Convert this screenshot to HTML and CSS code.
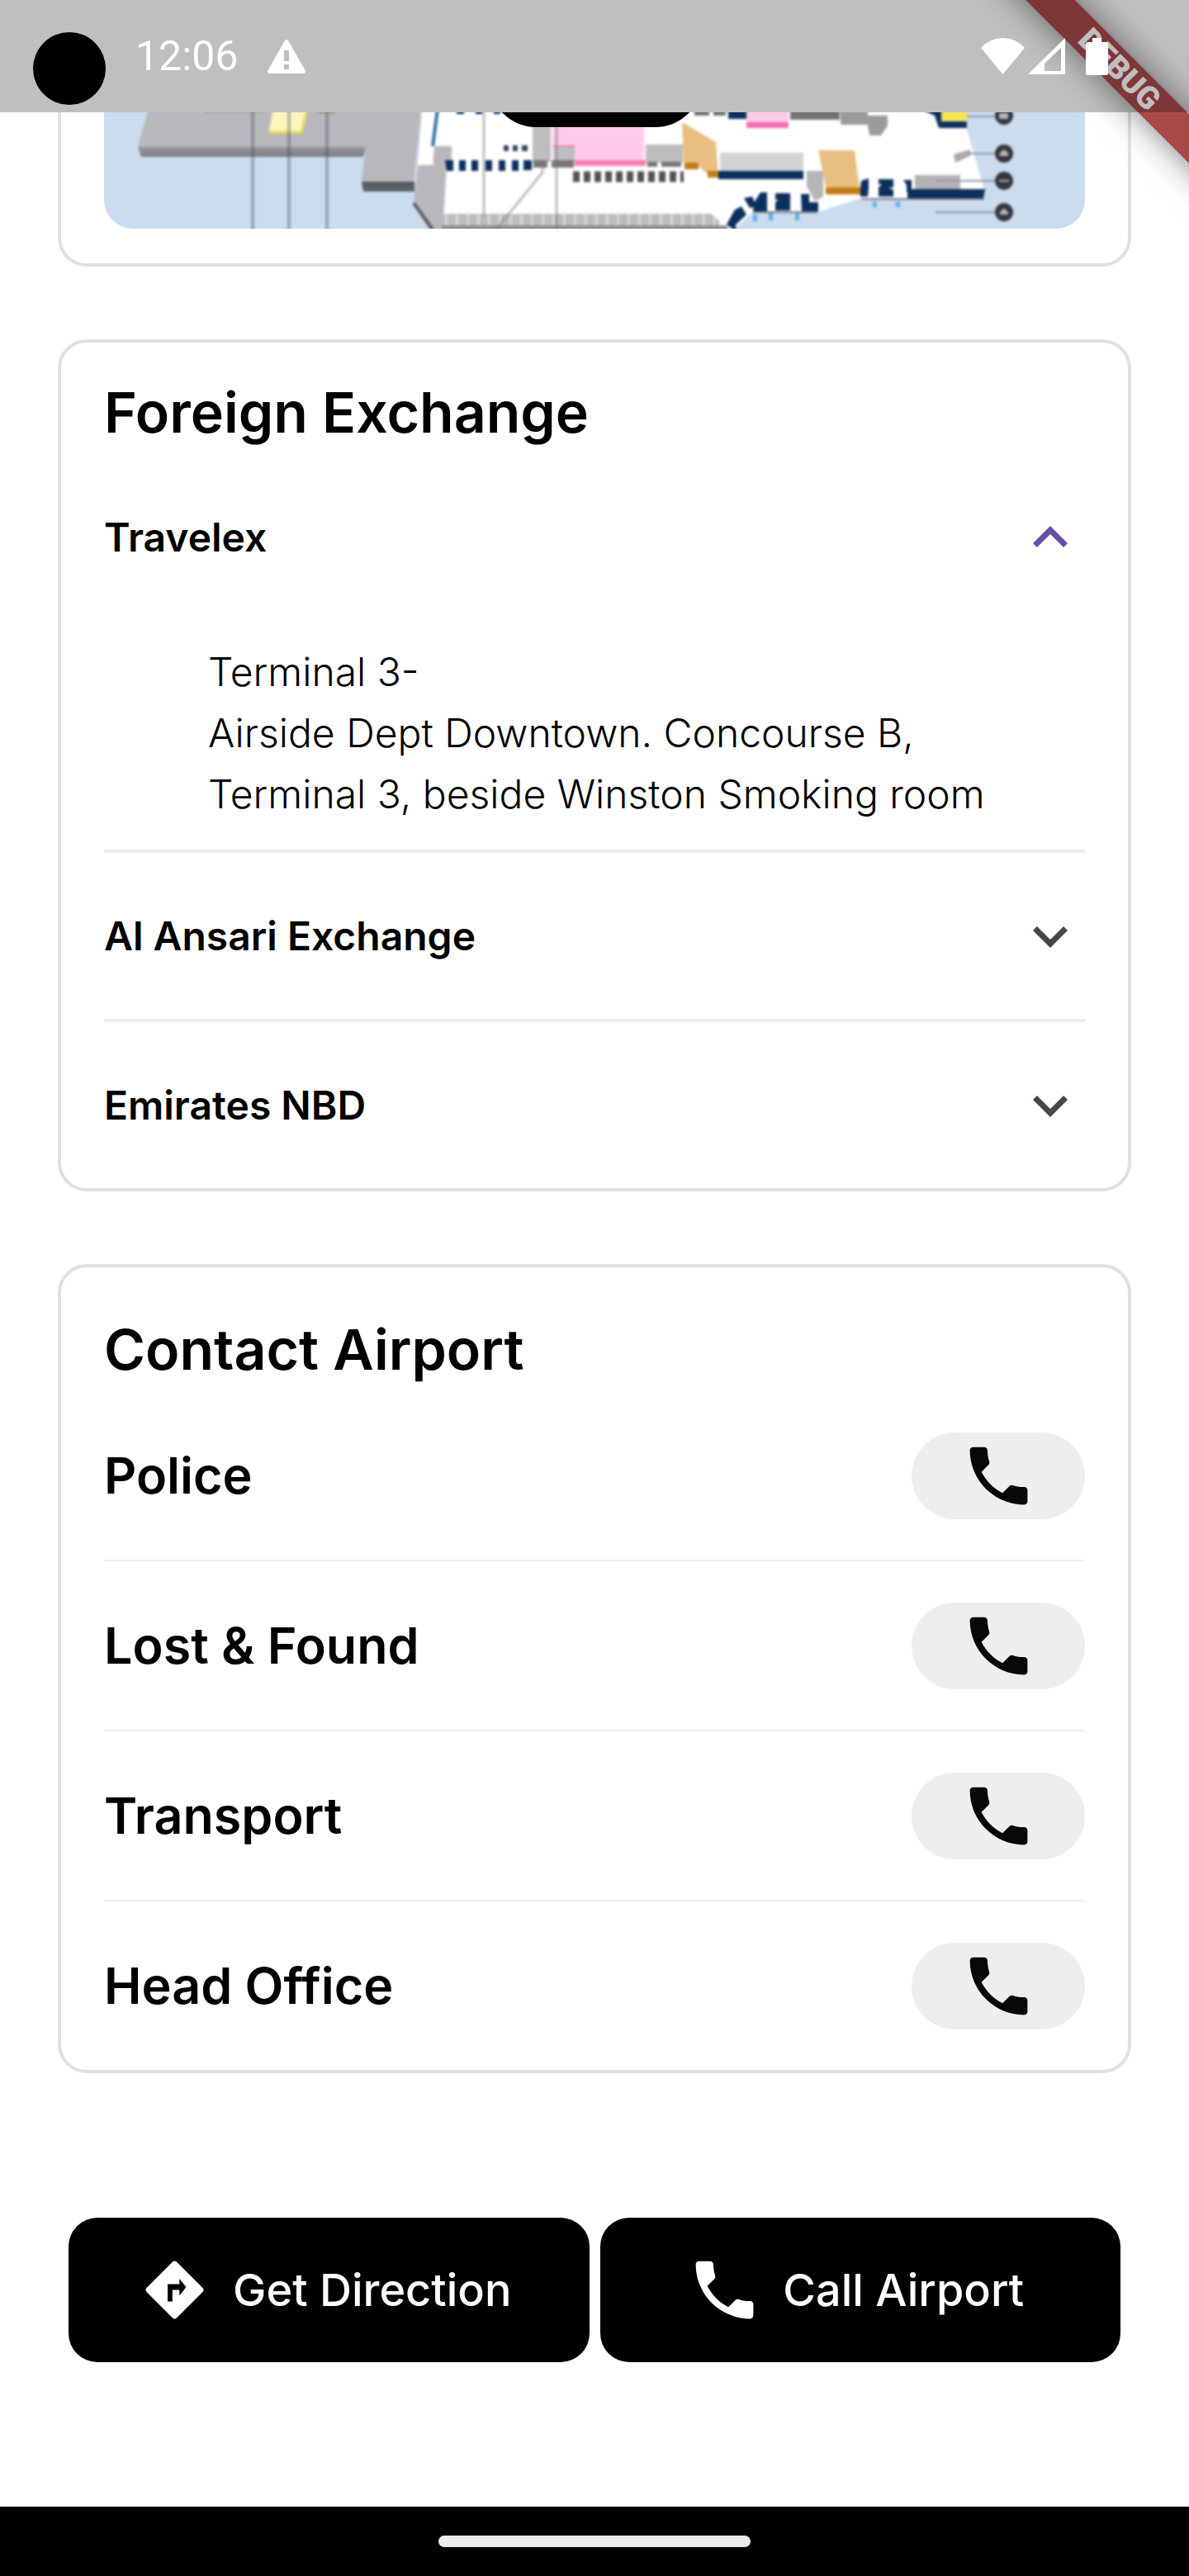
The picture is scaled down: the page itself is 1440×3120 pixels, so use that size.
FILE: index.html
```html
<!DOCTYPE html>
<html lang="en">
<head>
<meta charset="utf-8">
<meta name="viewport" content="width=device-width, initial-scale=1">
<title>Airport details</title>
<link rel="stylesheet" href="styles.css">
</head>
<body>
<svg class="sprite" aria-hidden="true">
  <symbol id="phone" viewBox="0 0 24 24"><path d="M6.62 10.79c1.44 2.83 3.76 5.14 6.59 6.59l2.2-2.2c.27-.27.67-.36 1.02-.24 1.12.37 2.33.57 3.57.57.55 0 1 .45 1 1V20c0 .55-.45 1-1 1-9.39 0-17-7.61-17-17 0-.55.45-1 1-1h3.5c.55 0 1 .45 1 1 0 1.25.2 2.45.57 3.57.11.35.03.74-.25 1.02l-2.2 2.2z"/></symbol>
  <symbol id="chevron" viewBox="0 0 24 24"><path d="M16.59 8.59 12 13.17 7.41 8.59 6 10l6 6 6-6z"/></symbol>
  <symbol id="direction" viewBox="0 0 24 24"><path d="M20.7 11.3l-8-8a1 1 0 0 0-1.4 0l-8 8a1 1 0 0 0 0 1.4l8 8a1 1 0 0 0 1.4 0l8-8a1 1 0 0 0 0-1.4zM13.5 13.8V12h-2.2v3.6H9.8v-5.4h3.7V8.5l2.1 2.6z"/></symbol>
</svg>

<header class="status">
  <span class="camera"></span>
  <time class="clock">12:06</time>
  <svg class="warn" viewBox="0 0 46 41" role="img" aria-label="Warning"><path fill="#fff" fill-rule="evenodd" d="M21 1q2-2 4 0l21 37q0 3-2 3H2q-2 0-2-3zM20 13v13h6V13zM20 30v6h6v-6z"/></svg>
  <div class="signals">
    <svg width="53" height="44" viewBox="0 0 53 44" role="img" aria-label="Wi-Fi"><path fill="#fff" d="M0 12Q11 0 26.5 0T53 12L26.5 44z"/></svg>
    <svg width="45" height="44" viewBox="0 0 45 44" role="img" aria-label="Mobile signal"><path fill="#fff" fill-rule="evenodd" d="M45 0v44H0zM40 12 20 31v9h20z"/></svg>
    <svg class="battery" width="27" height="45" viewBox="0 0 27 45" role="img" aria-label="Battery"><path fill="#fff" d="M8 0h11v5h6q2 0 2 2v36q0 2-2 2H2q-2 0-2-2V7q0-2 2-2h6z"/></svg>
  </div>
</header>
<div class="corner"><span class="ribbon">DEBUG</span></div>

<main class="page">
  <section class="card map-card" aria-label="Terminal map">
    <svg class="map" viewBox="0 0 1188 141" preserveAspectRatio="xMidYMax slice" role="img" aria-label="Terminal floor plan">
      <defs>
        <filter id="soft" x="0" y="0" width="1188" height="141" filterUnits="userSpaceOnUse" color-interpolation-filters="sRGB"><feGaussianBlur stdDeviation="1.8"/></filter>
        <pattern id="stripes" width="13" height="20" patternUnits="userSpaceOnUse"><path fill="#bcbcbe" d="M0 0h10v20H0z"/><path fill="#d7d7d9" d="M10 0h3v20h-3z"/></pattern>
        <linearGradient id="edge" x2="0" y2="1"><stop stop-color="#98979c"/><stop offset=".6" stop-color="#4c4f55"/><stop offset="1" stop-color="#5f646c"/></linearGradient>
      </defs>
      <path fill="#cbdcee" d="M-5-5h1198v151H-5z"/>
      <g filter="url(#soft)">
        <path fill="#b8b7bd" d="M54-5 41 42h276l-5 42h63l10-89z"/>
        <path fill="url(#edge)" d="M41 42h276l-3 12H45zM312 84h64v12h-62z"/>
        <path fill="#8d8c91" d="M122-2h70v2h-70zM258-2h22v3h-22z"/>
        <path fill="#fdf3bf" d="M205-4h41l-7 28h-40z"/>
        <path fill="none" stroke="#ecdf4e" stroke-width="3" d="M246-4l-7 28h-40"/>
        <path fill="none" stroke="#36465c" stroke-opacity=".35" stroke-width="4" d="M180-5v151M224-5v151M270-5v151"/>
        <path fill="#fff" d="M385-5h657l3 26 21 73v10H917l-53 17h-78l-28 25H400l-24-30 4-51z"/>
        <path fill="#b8b7bd" d="M380 64h35l-5 82h-14l-21-34zM400 41h21v26h-23z"/>
        <path fill="none" stroke="#5b5d63" stroke-width="4" d="M375 110l23 32"/>
        <path fill="none" stroke="#2d71a1" stroke-width="4" d="M404-4l-6 45"/>
        <path fill="#0b2f5e" d="M413 58h10v13h-8zM430 58h8v13h-8zM445 58h8v13h-8zM462 58h8v13h-8zM478 58h8v13h-8zM494 58h8v13h-8zM508 58h10v12h-10zM427-2h9v4h-9zM450-2h8v4h-8zM472-2h8v4h-8z"/>
        <path fill="#2f4663" d="M484 40h6v7h-6zM495 40h6v7h-6zM506 40h7v7h-7z"/>
        <path fill="url(#stripes)" d="M409 123h326l10 8v16H409z"/>
        <path fill="#8f8f91" d="M409 137h346v9H409z"/>
        <path fill="#fdcbe7" d="M543 10h111v49H543z"/>
        <path fill="#f27fb7" d="M543 40h27v2h-27zM570 58h86v7h-86z"/>
        <path fill="#bdbdbf" d="M519 10h22v50h-22zM545 42h25v18h-25zM656 39h45v22h-45z"/>
        <path fill="#757576" d="M520 58h17v9h-17zM542 58h27v9h-27zM658 60h12v6h-12zM675 60h24v6h-24z"/>
        <path fill="none" stroke="#505256" stroke-width="13" stroke-dasharray="8 5" d="M568 78h134"/>
        <path fill="none" stroke="#77787c" stroke-opacity=".5" stroke-width="3" d="M460-4v130M548 10v134M531 67v6l-57 70"/>
        <path fill="#e9be83" d="M700 12l41 24 3 43-13-4-11-10-18-3z"/>
        <path fill="#c37b16" d="M703 61h17v8h-17zM731 71h13v8h-13z"/>
        <path fill="#d2d2d4" d="M746 49h101v22H746z"/>
        <path fill="#0b2f5e" d="M744 71h103v10H744z"/>
        <path fill="#b5b5b9" d="M851 71h20v31l-10 6-10-18z"/>
        <path fill="#e9be83" d="M865 46h44l7 54h-40z"/>
        <path fill="#c37b16" d="M874 91h42v8h-42z"/>
        <path fill="#b3b3b5" d="M982 76h55v17h-55z"/>
        <path fill="#0b2f5e" d="M973 93h94l-2 12h-92zM916 93l1-10 9-3v12l-1 10h-9zM938 81h18v10h-6l6 3v8h-18v-11l4-4h-4zM968 82h10v20l-6-6v-8zM787 110l8-13h8v23h-17zM813 98h18v21h-18v-10l4-3h-4zM844 99h10v10h11v11h-20zM754 136l10-18 8-4 6 10-13 12v8zM775 104l10-2 5 12-8 2z"/>
        <path fill="none" stroke="#77787c" stroke-width="2" d="M786 121h78M917 105h149"/>
        <path fill="#67afe0" d="M931 108h5v7h-5zM959 108h5v7h-5zM786 124h5v8h-5zM805 122h5v9h-5zM837 122h5v9h-5z"/>
        <path fill="#747477" d="M715-3h18v7h-18zM738-3h15v7h-15zM831-3h60V9h-60z"/>
        <path fill="#9b9b9e" d="M892-3h33v18h-33zM923 4h26v12l-8 12h-14z"/>
        <path fill="#0b2f5e" d="M756-3h22V8h-22zM991-3h54v22h-34l-5-15z"/>
        <path fill="#fdcbe7" d="M778-3h51v16h-51z"/>
        <path fill="#f46eb0" d="M778 12h51v7h-51z"/>
        <path fill="#f6e656" d="M1014-3h31v14h-31z"/>
        <path fill="#aaaaad" d="M1029 51l20-6v8l-18 8z"/>
        <path fill="none" stroke="#8d96a4" stroke-width="2" d="M1045 5h34M1046 50h33M1007 83h72M1007 121h72"/>
        <g fill="#34363e"><circle cx="1090" cy="4" r="11"/><circle cx="1090" cy="50" r="11"/><circle cx="1090" cy="83" r="11"/><circle cx="1090" cy="121" r="11"/></g>
        <path fill="#b9b5b8" d="M1084 1h11v7h-11zM1085 49l5-4 5 4v4h-10zM1084 82h12v2h-12zM1085 121l5-5 5 5v3h-10z"/>
      </g>
      <rect x="467" y="-94" width="257" height="112" rx="56"/>
    </svg>
  </section>

  <section class="card">
    <h2 class="title">Foreign Exchange</h2>
    <details class="fold" open>
      <summary class="fold-head">Travelex<svg class="chevron" aria-hidden="true"><use href="#chevron"/></svg></summary>
      <p class="fold-body">Terminal 3-<br>Airside Dept Downtown. Concourse B,<br>Terminal 3, beside Winston Smoking room</p>
    </details>
    <details class="fold">
      <summary class="fold-head">Al Ansari Exchange<svg class="chevron" aria-hidden="true"><use href="#chevron"/></svg></summary>
    </details>
    <details class="fold">
      <summary class="fold-head">Emirates NBD<svg class="chevron" aria-hidden="true"><use href="#chevron"/></svg></summary>
    </details>
  </section>

  <section class="card contact">
    <h2 class="title">Contact Airport</h2>
    <ul class="contacts">
      <li class="contact-row">Police<button class="pill" aria-label="Call Police"><svg class="icon" aria-hidden="true"><use href="#phone"/></svg></button></li>
      <li class="contact-row">Lost &amp; Found<button class="pill" aria-label="Call Lost &amp; Found"><svg class="icon" aria-hidden="true"><use href="#phone"/></svg></button></li>
      <li class="contact-row">Transport<button class="pill" aria-label="Call Transport"><svg class="icon" aria-hidden="true"><use href="#phone"/></svg></button></li>
      <li class="contact-row">Head Office<button class="pill" aria-label="Call Head Office"><svg class="icon" aria-hidden="true"><use href="#phone"/></svg></button></li>
    </ul>
  </section>
</main>

<div class="actions">
  <button class="action"><svg class="icon" aria-hidden="true"><use href="#direction"/></svg>Get Direction</button>
  <button class="action"><svg class="icon" aria-hidden="true"><use href="#phone"/></svg>Call Airport</button>
</div>
<footer class="nav"><span class="handle"></span></footer>
</body>
</html>
```

FILE: styles.css
```css
* { box-sizing: border-box; }

body {
  margin: 0;
  min-height: 100vh;
  display: flex;
  flex-direction: column;
  position: relative;
  background: #fff;
  color: #000;
  font-family: Inter, "Liberation Sans", sans-serif;
}

.sprite { position: absolute; width: 0; height: 0; }

/* System status bar, tinted over whatever lies below it */
.status {
  position: relative;
  z-index: 2;
  display: flex;
  align-items: center;
  height: 136px;
  padding: 0 98px 0 40px;
  background: rgba(0, 0, 0, .25);
  color: #fff;
}
.camera { width: 88px; height: 88px; margin-top: 30px; border-radius: 50%; background: #000; }
.clock { margin-left: 36px; font: 400 50px/60px Roboto, sans-serif; }
.warn { width: 46px; height: 41px; margin-left: 35px; }
.signals { display: flex; align-items: center; gap: 4px; margin-left: auto; }
.battery { margin-left: 21px; }

.corner { position: absolute; z-index: 1; top: 0; right: 0; width: 300px; height: 300px; overflow: hidden; pointer-events: none; }
.ribbon {
  position: absolute;
  top: 63px;
  left: 16px;
  width: 400px;
  height: 42px;
  transform: rotate(45deg);
  background: #a94848;
  box-shadow: 0 0 42px rgba(0, 0, 0, .5);
  color: #fff;
  font: 900 38px/42px Roboto, sans-serif;
  text-align: center;
}

.page { display: flex; flex-direction: column; gap: 88px; padding: 0 70px; }
.card { border: 4px solid #e0e0e0; border-radius: 35px; padding: 42px 52px 0; }
.map-card { border-top: 0; border-radius: 0 0 35px 35px; padding: 0 52px 42px; }
.map { display: block; width: 100%; height: 141px; border-radius: 0 0 35px 35px; }
.contact { padding-top: 57px; }

.title { margin: 0 0 9px; font-size: 68px; line-height: 84px; font-weight: 600; }

.fold + .fold { border-top: 4px solid #eee; }
.fold-head {
  display: flex;
  align-items: center;
  justify-content: space-between;
  height: 201px;
  list-style: none;
  font-size: 48px;
  font-weight: 600;
  cursor: pointer;
}
.fold-head::-webkit-details-marker { display: none; }
.chevron { width: 84px; height: 84px; fill: #49454f; }
.fold[open] .chevron { fill: #6750a4; transform: rotate(180deg); }
.fold-body { margin: 0; padding: 26px 0 30px 126px; font-size: 48px; line-height: 74px; font-weight: 300; }

.contacts { margin: 0; padding: 0; list-style: none; }
.contact-row { display: flex; align-items: center; justify-content: space-between; height: 204px; font-size: 61px; font-weight: 600; }
.contact-row + .contact-row { height: 206px; border-top: 2px solid #eee; }
.pill {
  display: flex;
  align-items: center;
  justify-content: center;
  width: 210px;
  height: 105px;
  padding: 0;
  border: 0;
  border-radius: 53px;
  background: #eee;
  color: #080808;
}
.icon { width: 93px; height: 93px; fill: currentColor; }

.actions { display: flex; gap: 13px; padding: 175px 83px; }
.action {
  flex: 1;
  display: flex;
  align-items: center;
  justify-content: center;
  gap: 24px;
  height: 175px;
  padding: 0 12px 0 0;
  border: 0;
  border-radius: 35px;
  background: #000;
  color: #fff;
  font: 500 54px/70px Inter, "Liberation Sans", sans-serif;
}

.nav { display: flex; align-items: center; justify-content: center; height: 84px; margin-top: auto; background: #000; }
.handle { width: 378px; height: 14px; border-radius: 7px; background: #ebebeb; }
```
